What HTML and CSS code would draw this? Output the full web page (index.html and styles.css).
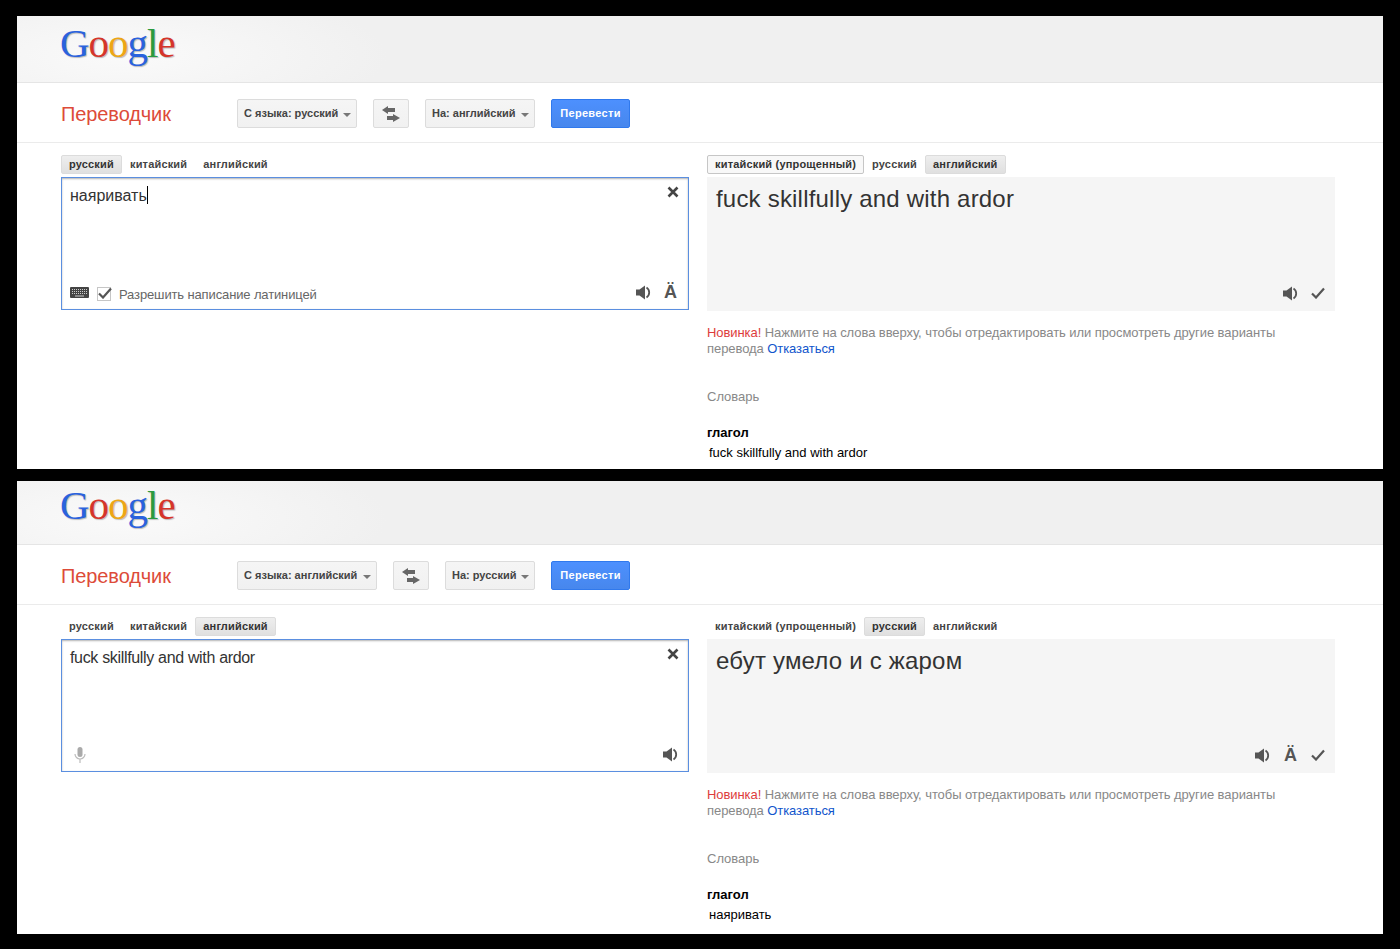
FILE: index.html
```html
<!DOCTYPE html>
<html lang="ru">

<head>
  <meta charset="UTF-8">
  <title>Переводчик</title>
  <link rel="stylesheet" href="styles.css">
</head>

<body>
  <svg class="defs" width="0" height="0">
    <symbol id="i-swap" viewBox="0 0 18 16">
      <path d="M6 0 0 4l6 4V6h7V2H6zM11 8v2H5v4h6v2l7-4z" fill="#666"/>
    </symbol>
    <symbol id="i-close" viewBox="0 0 12 12">
      <path d="M1.500 1.500l9 9M10.500 1.500l-9 9" stroke="#444" stroke-width="2.600" fill="none"/>
    </symbol>
    <symbol id="i-speaker" viewBox="0 0 15 15">
      <path d="M0 4.500h3.500L9 .5v14l-5.500-4H0z" fill="#555"/>
      <path d="M10.500 2.500a6 6 0 0 1 0 10" stroke="#555" stroke-width="1.800" fill="none"/>
    </symbol>
    <symbol id="i-check" viewBox="0 0 14 12">
      <path d="M1 6.500l4 4 8-9" stroke="#555" stroke-width="2.200" fill="none"/>
    </symbol>
    <symbol id="i-keyboard" viewBox="0 0 19 11">
      <rect width="19" height="11" rx="1" fill="#444"/>
      <path d="M2 2.500h15M2 4.500h15M2 6.500h15" stroke="#ccc" stroke-width="1" stroke-dasharray="1 1"/>
      <path d="M5 9h9" stroke="#ccc" stroke-width="1"/>
    </symbol>
    <symbol id="i-mic" viewBox="0 0 12 16">
      <rect x="3.500" y="0" width="5" height="10" rx="2.500" fill="#aaa"/>
      <path d="M1 7a5 5 0 0 0 10 0M6 12v4" stroke="#bbb" stroke-width="1.200" fill="none"/>
    </symbol>
  </svg>

  <!-- русский -> английский -->
  <div class="panel">
    <div class="header header-tall">
      <div class="logo"><span class="c-blue">G</span><span class="c-red">o</span><span class="c-yellow">o</span><span class="c-blue">g</span><span class="c-green">l</span><span class="c-red">e</span></div>
    </div>
    <div class="toolbar">
      <div class="title">Переводчик</div>
      <div class="btn select w120">С языка: русский<i class="caret"></i></div>
      <div class="btn swap"><svg><use href="#i-swap"/></svg></div>
      <div class="btn select w110">На: английский<i class="caret"></i></div>
      <div class="btn primary">Перевести</div>
    </div>
    <div class="columns">
      <div>
        <div class="tabs">
          <span class="tab active">русский</span>
          <span class="tab">китайский</span>
          <span class="tab">английский</span>
        </div>
        <div class="source">
          <div class="source-top">
            <div class="source-text">наяривать<span class="cursor"></span></div>
            <svg class="icon-close"><use href="#i-close"/></svg>
          </div>
          <div class="source-foot">
            <svg class="icon-keyboard"><use href="#i-keyboard"/></svg>
            <span class="checkbox"><svg><use href="#i-check"/></svg></span>
            <span class="latin">Разрешить написание латиницей</span>
            <span class="spacer"></span>
            <svg class="icon-speaker"><use href="#i-speaker"/></svg>
            <span class="icon-alpha">Ä</span>
          </div>
        </div>
      </div>
      <div>
        <div class="tabs">
          <span class="tab outlined">китайский (упрощенный)</span>
          <span class="tab">русский</span>
          <span class="tab active">английский</span>
        </div>
        <div class="result">
          <div class="result-text">fuck skillfully and with ardor</div>
          <div class="result-foot">
            <svg class="icon-speaker"><use href="#i-speaker"/></svg>
            <svg class="icon-check"><use href="#i-check"/></svg>
          </div>
        </div>
        <p class="note"><span class="new">Новинка!</span> Нажмите на слова вверху, чтобы отредактировать или просмотреть другие варианты перевода <a href="#">Отказаться</a></p>
        <div class="dict-title">Словарь</div>
        <div class="dict-pos">глагол</div>
        <div class="dict-entry">fuck skillfully and with ardor</div>
      </div>
    </div>
  </div>

  <!-- английский -> русский -->
  <div class="panel">
    <div class="header">
      <div class="logo"><span class="c-blue">G</span><span class="c-red">o</span><span class="c-yellow">o</span><span class="c-blue">g</span><span class="c-green">l</span><span class="c-red">e</span></div>
    </div>
    <div class="toolbar">
      <div class="title">Переводчик</div>
      <div class="btn select w140">С языка: английский<i class="caret"></i></div>
      <div class="btn swap"><svg><use href="#i-swap"/></svg></div>
      <div class="btn select w90">На: русский<i class="caret"></i></div>
      <div class="btn primary">Перевести</div>
    </div>
    <div class="columns">
      <div>
        <div class="tabs">
          <span class="tab">русский</span>
          <span class="tab">китайский</span>
          <span class="tab active">английский</span>
        </div>
        <div class="source">
          <div class="source-top">
            <div class="source-text en">fuck skillfully and with ardor</div>
            <svg class="icon-close"><use href="#i-close"/></svg>
          </div>
          <div class="source-foot">
            <svg class="icon-mic"><use href="#i-mic"/></svg>
            <span class="spacer"></span>
            <svg class="icon-speaker"><use href="#i-speaker"/></svg>
          </div>
        </div>
      </div>
      <div>
        <div class="tabs">
          <span class="tab">китайский (упрощенный)</span>
          <span class="tab active">русский</span>
          <span class="tab">английский</span>
        </div>
        <div class="result">
          <div class="result-text">ебут умело и с жаром</div>
          <div class="result-foot">
            <svg class="icon-speaker"><use href="#i-speaker"/></svg>
            <span class="icon-alpha">Ä</span>
            <svg class="icon-check"><use href="#i-check"/></svg>
          </div>
        </div>
        <p class="note"><span class="new">Новинка!</span> Нажмите на слова вверху, чтобы отредактировать или просмотреть другие варианты перевода <a href="#">Отказаться</a></p>
        <div class="dict-title">Словарь</div>
        <div class="dict-pos">глагол</div>
        <div class="dict-entry">наяривать</div>
      </div>
    </div>
  </div>
</body>

</html>
```

FILE: styles.css
```css
html,
body {
  height: 100%;
}

body {
  margin: 0;
  padding: 16px 17px 15px;
  box-sizing: border-box;
  background-color: #000;
  font-family: "Liberation Sans", Arial, sans-serif;
  overflow: hidden;
}

.defs {
  position: absolute;
}

.panel {
  height: 453px;
  margin-bottom: 12px;
  background-color: #fff;
  overflow: hidden;
}

.header {
  height: 63px;
  padding-left: 43px;
  background: radial-gradient(ellipse 260px 70px at 110px 60%, #fafafa, #f0f0f0);
  border-bottom: 1px solid #e5e5e5;
}

.header-tall {
  height: 63px;
  padding-top: 3px;
}

.logo {
  font-family: "Liberation Serif", serif;
  font-size: 41px;
  line-height: 48px;
  letter-spacing: -1px;
  text-shadow: 1px 1px 1px rgba(0, 0, 0, .25);
}

.c-blue { color: #2a62dd; }
.c-red { color: #d5352a; }
.c-yellow { color: #eda615; }
.c-green { color: #2b9a3e; }

.toolbar {
  display: flex;
  align-items: center;
  height: 57px;
  padding: 2px 0 0 44px;
  border-bottom: 1px solid #ebebeb;
}

.title {
  width: 176px;
  margin-top: 2px;
  font-size: 20px;
  letter-spacing: -.1px;
  color: #dd4b39;
}

.btn {
  box-sizing: border-box;
  height: 29px;
  line-height: 27px;
  margin-right: 16px;
  padding: 0 6px;
  font-size: 11px;
  font-weight: bold;
  color: #444;
  white-space: nowrap;
  background: linear-gradient(#f5f5f5, #f1f1f1);
  border: 1px solid #dcdcdc;
  border-radius: 2px;
}

.select {
  display: flex;
  align-items: center;
  justify-content: space-between;
  padding-right: 5px;
}

.w90 { width: 90px; }
.w110 { width: 110px; }
.w120 { width: 120px; }
.w140 { width: 140px; }

.caret {
  margin-top: 2px;
  border-top: 4px solid #777;
  border-left: 4px solid transparent;
  border-right: 4px solid transparent;
}

.swap {
  display: flex;
  align-items: center;
  justify-content: center;
  width: 36px;
  padding: 0;
}

.swap svg {
  width: 18px;
  height: 16px;
}

.primary {
  width: 79px;
  padding: 0;
  letter-spacing: .3px;
  text-align: center;
  color: #fff;
  background: linear-gradient(#4d90fe, #4787ed);
  border-color: #3079ed;
}

.columns {
  display: grid;
  grid-template-columns: 628px 628px;
  column-gap: 18px;
  padding: 12px 0 0 44px;
}

.tabs {
  display: flex;
  height: 19px;
  margin-bottom: 3px;
  font-size: 11px;
  font-weight: bold;
  letter-spacing: .18px;
  color: #444;
}

.tab {
  padding: 0 7px;
  line-height: 17px;
  border: 1px solid transparent;
  border-radius: 2px;
  white-space: nowrap;
}

.tab.active {
  color: #333;
  background: linear-gradient(#eee, #e0e0e0);
  border-color: #dcdcdc;
}

.tab.outlined {
  color: #333;
  background: #f8f8f8;
  border-color: #c6c6c6;
}

.source {
  display: flex;
  flex-direction: column;
  justify-content: space-between;
  height: 133px;
  box-sizing: border-box;
  border: 1px solid #5b8fe0;
  box-shadow: inset 0 1px 2px rgba(0, 0, 0, .3);
}

.source-top {
  display: flex;
  justify-content: space-between;
  padding: 8px 9px 0 8px;
}

.source-text {
  font-size: 16px;
  line-height: 20px;
  color: #333;
}

.source-text.en {
  letter-spacing: -.33px;
}

.cursor {
  display: inline-block;
  width: 1px;
  height: 18px;
  vertical-align: -3px;
  background-color: #000;
}

.icon-close {
  width: 12px;
  height: 12px;
}

.source-foot,
.result-foot {
  display: flex;
  align-items: center;
  gap: 12px;
  height: 20px;
}

.source-foot {
  padding: 0 10px 7px 8px;
}

.result-foot {
  justify-content: flex-end;
  gap: 13px;
  padding: 0 10px 8px 0;
}

.icon-keyboard {
  width: 19px;
  height: 11px;
  margin-right: -4px;
}

.checkbox {
  width: 12px;
  height: 12px;
  margin-top: 4px;
  border: 1px solid #c6c6c6;
  position: relative;
}

.checkbox svg {
  position: absolute;
  left: 0;
  top: -1px;
  width: 14px;
  height: 12px;
}

.latin {
  margin: 4px 0 0 -4px;
  font-size: 13px;
  letter-spacing: -.13px;
  color: #666;
}

.spacer {
  flex: 1;
}

.icon-speaker {
  width: 15px;
  height: 15px;
}

.icon-check {
  width: 14px;
  height: 12px;
}

.icon-alpha {
  width: 15px;
  font-size: 18px;
  font-weight: bold;
  line-height: 20px;
  text-align: center;
  color: #555;
}

.icon-mic {
  width: 12px;
  height: 16px;
  margin: 2px 0 0 4px;
}

.result {
  display: flex;
  flex-direction: column;
  justify-content: space-between;
  height: 134px;
  background-color: #f5f5f5;
}

.result-text {
  padding: 8px 9px 0;
  font-size: 24px;
  letter-spacing: .2px;
  line-height: 28px;
  color: #333;
}

.note {
  margin: 14px 0 0;
  padding-right: 20px;
  font-size: 13px;
  letter-spacing: -.07px;
  line-height: 16px;
  color: #888;
}

.new {
  color: #dd3c3c;
}

.note a {
  color: #1155cc;
  text-decoration: none;
}

.dict-title {
  margin-top: 32px;
  font-size: 13px;
  line-height: 16px;
  color: #888;
}

.dict-pos {
  margin-top: 20px;
  font-size: 13px;
  font-weight: bold;
  line-height: 16px;
  color: #000;
}

.dict-entry {
  margin-top: 4px;
  padding-left: 2px;
  font-size: 13px;
  line-height: 16px;
  color: #000;
}
```
